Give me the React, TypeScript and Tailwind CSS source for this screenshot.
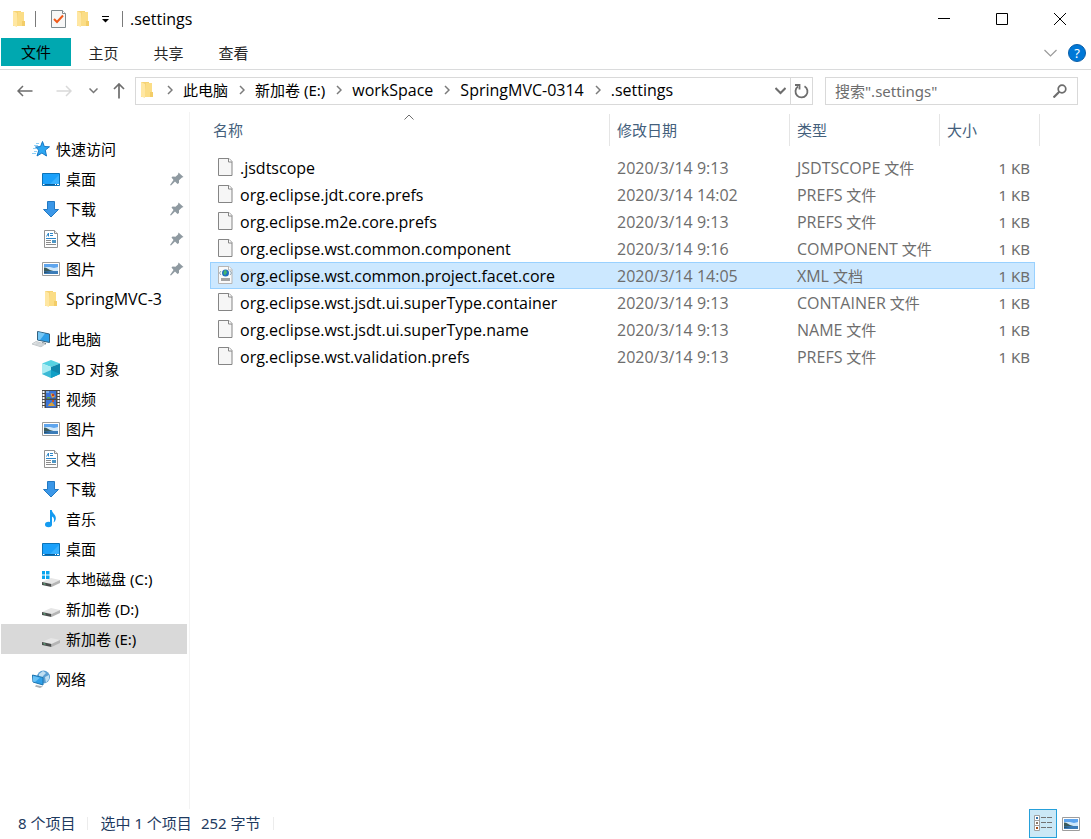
import React, { useState } from 'react';

type IconName =
    | 'star' | 'desktop' | 'download' | 'document' | 'picture' | 'folder' | 'pc'
    | 'cube' | 'video' | 'music' | 'systemDrive' | 'drive' | 'network';

type NavItem = {
    id: string;
    label: string;
    icon: IconName;
    pinned?: boolean;
};

type NavGroup = {
    root: NavItem;
    children: NavItem[];
};

type FileRow = {
    name: string;
    date: string;
    ext: string;
    kind: string;
    size: string;
    xml?: boolean;
};

const navGroups: NavGroup[] = [
    {
        root: { id: 'quick', label: '快速访问', icon: 'star' },
        children: [
            { id: 'q-desktop', label: '桌面', icon: 'desktop', pinned: true },
            { id: 'q-download', label: '下载', icon: 'download', pinned: true },
            { id: 'q-document', label: '文档', icon: 'document', pinned: true },
            { id: 'q-picture', label: '图片', icon: 'picture', pinned: true },
            { id: 'q-spring', label: 'SpringMVC-3', icon: 'folder' },
        ],
    },
    {
        root: { id: 'pc', label: '此电脑', icon: 'pc' },
        children: [
            { id: '3d', label: '3D 对象', icon: 'cube' },
            { id: 'video', label: '视频', icon: 'video' },
            { id: 'picture', label: '图片', icon: 'picture' },
            { id: 'document', label: '文档', icon: 'document' },
            { id: 'download', label: '下载', icon: 'download' },
            { id: 'music', label: '音乐', icon: 'music' },
            { id: 'desktop', label: '桌面', icon: 'desktop' },
            { id: 'c', label: '本地磁盘 (C:)', icon: 'systemDrive' },
            { id: 'd', label: '新加卷 (D:)', icon: 'drive' },
            { id: 'e', label: '新加卷 (E:)', icon: 'drive' },
        ],
    },
    { root: { id: 'network', label: '网络', icon: 'network' }, children: [] },
];

const files: FileRow[] = [
    { name: '.jsdtscope', date: '2020/3/14 9:13', ext: 'JSDTSCOPE', kind: '文件', size: '1 KB' },
    { name: 'org.eclipse.jdt.core.prefs', date: '2020/3/14 14:02', ext: 'PREFS', kind: '文件', size: '1 KB' },
    { name: 'org.eclipse.m2e.core.prefs', date: '2020/3/14 9:13', ext: 'PREFS', kind: '文件', size: '1 KB' },
    { name: 'org.eclipse.wst.common.component', date: '2020/3/14 9:16', ext: 'COMPONENT', kind: '文件', size: '1 KB' },
    { name: 'org.eclipse.wst.common.project.facet.core', date: '2020/3/14 14:05', ext: 'XML', kind: '文档', size: '1 KB', xml: true },
    { name: 'org.eclipse.wst.jsdt.ui.superType.container', date: '2020/3/14 9:13', ext: 'CONTAINER', kind: '文件', size: '1 KB' },
    { name: 'org.eclipse.wst.jsdt.ui.superType.name', date: '2020/3/14 9:13', ext: 'NAME', kind: '文件', size: '1 KB' },
    { name: 'org.eclipse.wst.validation.prefs', date: '2020/3/14 9:13', ext: 'PREFS', kind: '文件', size: '1 KB' },
];

const crumbs = ['此电脑', '新加卷 (E:)', 'workSpace', 'SpringMVC-0314', '.settings'];

// Latin-only labels are set one size larger than the Chinese ones
const LATIN = "font-['Open_Sans','Noto_Sans',sans-serif] text-[16px] leading-5";
const isLatin = (text: string) => /^[\x20-\x7e]+$/.test(text);

const FolderIcon = () => (
    <svg width="18" height="18" viewBox="0 0 18 18" className="shrink-0">
        <path d="M3 1h8v15H3z" fill="#f6d374" />
        <path d="M8 2h6v14H6z" fill="#fbdd86" />
        <path d="M12 11h3v5h-3z" fill="#f3cd68" />
        <path d="M3 1l4 2v14l-4-1.500z" fill="#ffe7a2" />
    </svg>
);

const PictureIcon = () => (
    <svg width="18" height="18" viewBox="0 0 18 18" className="shrink-0">
        <path d="M.5 2.500h17v13H.5z" fill="#fff" stroke="#9d9d9d" />
        <path d="M2 4h14v10H2z" fill="#cfe8fb" />
        <path d="M2 4h14v3l-4 1-4-1-6 0z" fill="#5ea5ee" />
        <path d="M2 7.500c3 0 4 1.500 6 2.500l5 1.500H2z" fill="#3c5b5c" />
        <path d="M2 11h14v3H2z" fill="#3b7cb8" />
        <path d="M2 11.500l7 .5-7 1z" fill="#26495c" />
    </svg>
);

const DriveBody = () => (
    <>
        <path d="M0 12l9-4 9 2-8.500 4z" fill="#e6e6e6" />
        <path d="M0 12l9.500 2v3L0 15z" fill="#4a4d4c" />
        <path d="M9.500 14L18 10v3l-8.500 4z" fill="#b5b5b5" />
        <path d="M1.500 13.700l2 .5" stroke="#63c38a" />
    </>
);

const NavIcon = ({ name }: { name: IconName }) => {
    if (name === 'folder') return <FolderIcon />;
    if (name === 'picture') return <PictureIcon />;
    return (
        <svg width="18" height="18" viewBox="0 0 18 18" className="shrink-0">
            {name === 'star' && (
                <>
                    <path d="M10.500 1.500l1.800 5 5.200.3-4.200 3.300 1.200 5.900-4.600-3-4.900 3 1.800-5.800L3.500 7l5-.4z" fill="#2da7f2" stroke="#1677c4" />
                    <path d="M4 3.500h3M2 5.500h4M1 8.500h3M2 11.500h3M0 13.500h4" stroke="#8fd0f6" />
                </>
            )}
            {name === 'desktop' && (
                <>
                    <path d="M.5 3.500h17v12H.5z" fill="#1ba1fb" stroke="#0b73b8" />
                    <path d="M8 14L17 5v9z" fill="#38b1ff" />
                    <path d="M1 14.500h16" stroke="#0c5e99" />
                    <path d="M1 14.500h1.500M13 14.500h1M15 14.500h2" stroke="#fff" />
                </>
            )}
            {name === 'download' && (
                <path d="M5.500 1.500h7v8h4L9 17 1.500 9.500h4z" fill="#3a97e8" stroke="#2379c2" />
            )}
            {name === 'document' && (
                <>
                    <path d="M2.500.5h10l3 3v14h-13z" fill="#fff" stroke="#929292" />
                    <path d="M12.500.5v3h3" fill="#eee" stroke="#929292" />
                    <path d="M4.500 6.500L6.500 3v3.500M8 3.500h3M8 5.500h3M4 8.500h10" stroke="#2c86c9" fill="none" />
                    <path d="M4 10.500h5M4 12.500h5M4 14.500h10" stroke="#8b8b8b" />
                    <path d="M10 10h4v3h-4z" fill="#4d96c5" />
                </>
            )}
            {name === 'pc' && (
                <>
                    <path d="M5.500 1.500l12 2.500v8.500L5.500 10z" fill="#2f9fe8" stroke="#34617e" />
                    <path d="M6 2l7 1.500L8 10l-2-.4z" fill="#76c7f5" />
                    <path d="M10 12l4 1v1.500l-4-1z" fill="#76848d" />
                    <path d="M0 14l4-2.500 9 2.500-4 2.800z" fill="#e3e6e8" stroke="#c3c8cb" />
                    <path d="M2.500 14l8 1.800M4 13l8 1.800" stroke="#cdd2d4" />
                </>
            )}
            {name === 'cube' && (
                <>
                    <path d="M0 3.500L9 0l9 3.500L9 7z" fill="#56d2e2" />
                    <path d="M0 3.500L9 7v11l-9-4z" fill="#a9ecf3" />
                    <path d="M18 3.500L9 7v11l9-4z" fill="#1087ad" />
                    <path d="M0 14l9-4v8z" fill="#3bb9d5" />
                    <path d="M9 10l9 4-9 4z" fill="#11a0c6" />
                </>
            )}
            {name === 'video' && (
                <>
                    <path d="M0 0h18v18H0z" fill="#4a4a4a" />
                    <path d="M1.500 1v17M16.500 1v17" stroke="#fff" strokeWidth="2" strokeDasharray="2 1" />
                    <path d="M4 1h10v7.500H4zM4 10h10v7.500H4z" fill="#3b75d8" />
                    <path d="M4 1h3v2H4z" fill="#77ace8" />
                    <path d="M8.500 3.500h3l1.500 3-3 1.500z" fill="#e7a33b" />
                    <path d="M10 4h2v2h-2z" fill="#c43d23" />
                    <path d="M7 14l3-2 3 4H6z" fill="#d6a13d" />
                    <path d="M10 10h2v2h-2z" fill="#c95325" />
                    <path d="M5 7h3v1.500H5z" fill="#58a24c" />
                </>
            )}
            {name === 'music' && (
                <>
                    <ellipse cx="6.500" cy="14.500" rx="3.500" ry="2.700" fill="#159bf0" />
                    <path d="M8 0h1.800c.3 3.500 4.700 4.500 4 9-.2 1.500-1.300 3-2.300 3.500 1-2.500.8-5-1.500-6v8H8z" fill="#159bf0" />
                </>
            )}
            {name === 'systemDrive' && (
                <>
                    <DriveBody />
                    <path d="M0 1h8v8H0z" fill="#fff" />
                    <path d="M0 1h3v3.500H0zM4 1h3.500v3.500H4zM0 5.500h3V9H0zM4 5.500h3.500V9H4z" fill="#08a5ed" />
                </>
            )}
            {name === 'drive' && <DriveBody />}
            {name === 'network' && (
                <>
                    <circle cx="11.500" cy="7" r="6.500" fill="#5b9fd2" />
                    <path d="M7 4l4-3 3 2-3 3-1 3-3-1zM13 7l4-2v4l-3 4z" fill="#c0dff2" />
                    <path d="M.5 5L11 7.500V15L1 12z" fill="#2f9fe8" stroke="#1d74af" />
                    <path d="M1 6l7 1.700L3 12l-2-.5z" fill="#68c1f5" />
                    <path d="M4 15l7 1.500-3 1.500-5-1.500z" fill="#a9b0b5" />
                </>
            )}
        </svg>
    );
};

const PinIcon = () => (
    <svg width="14" height="14" viewBox="0 0 14 14" className="shrink-0">
        <path d="M8.500.5l5 4.500-1.500.5-3 2.800V11L7.500 12 5 9.500 1 13.500l-1-.5 3.500-5L1.500 5.500 2.500 4.500l3 .3L8 2.500z" fill="#8f9aa1" />
    </svg>
);

const FileIcon = ({ xml }: { xml?: boolean }) => (
    <svg width="16" height="20" viewBox="0 0 16 20" className="shrink-0">
        <path d="M.5.5h10.500l3 3v14H.5z" fill={xml ? '#fafafa' : '#f6f6f6'} stroke={xml ? '#b5b5b5' : '#858585'} />
        <path d="M10.500.5V4H14" fill="#fff" stroke={xml ? '#b5b5b5' : '#858585'} />
        {xml && (
            <>
                <circle cx="7.500" cy="7" r="3.500" fill="#1d6fc0" />
                <path d="M6 4.500l2-.5 1 2.500-2 3-1.500-2z" fill="#45b46f" />
                <path d="M3 5L1.500 7 3 9M12 5l1.500 2L12 9" stroke="#8fa6b5" fill="none" />
                <path d="M3 12h9v3H3z" fill="#a3a3a3" />
            </>
        )}
    </svg>
);

const Chevron = () => (
    <svg width="6" height="10" viewBox="0 0 6 10" className="shrink-0">
        <path d="M1 1l4 4-4 4" fill="none" stroke="#7b7b7b" strokeWidth="1.500" />
    </svg>
);

const TitleBar = () => (
    <header className="flex h-[38px] items-center">
        <div className="flex flex-1 items-center pl-[10px]">
            <FolderIcon />
            <span className="ml-[7px] h-4 w-px bg-[#7a7a7a]" />
            <button aria-label="属性" className="ml-[15px]">
                <svg width="15" height="18" viewBox="0 0 15 18">
                    <path d="M.5.5h11l3 3v14H.5z" fill="#f7f7f7" stroke="#808a8e" />
                    <path d="M11.500.5v3h3" fill="#fff" stroke="#808a8e" />
                    <path d="M3 9l3 3 6-6.500" fill="none" stroke="#f05a1a" strokeWidth="2" />
                </svg>
            </button>
            <button aria-label="新建文件夹" className="ml-2"><FolderIcon /></button>
            <button aria-label="自定义快速访问工具栏" className="ml-[10px]">
                <svg width="7" height="7" viewBox="0 0 7 7">
                    <path d="M0 .5h7" stroke="#000" />
                    <path d="M0 3h7L3.500 6.500z" fill="#000" />
                </svg>
            </button>
            <span className="ml-[13px] h-4 w-px bg-[#7a7a7a]" />
            <h1 className={`ml-[7px] ${LATIN}`}>.settings</h1>
        </div>
        <div className="flex self-stretch pr-0.5">
            <button aria-label="最小化" className="flex w-[58px] items-center justify-center">
                <svg width="12" height="12" viewBox="0 0 12 12"><path d="M0 5.500h12" stroke="#000" /></svg>
            </button>
            <button aria-label="最大化" className="flex w-[58px] items-center justify-center">
                <svg width="12" height="12" viewBox="0 0 12 12"><path d="M.5.5h11v11H.5z" fill="none" stroke="#000" /></svg>
            </button>
            <button aria-label="关闭" className="flex w-[58px] items-center justify-center">
                <svg width="12" height="12" viewBox="0 0 12 12"><path d="M0 0l12 12M12 0L0 12" stroke="#000" /></svg>
            </button>
        </div>
    </header>
);

const RibbonTabs = () => (
    <nav className="flex h-8 items-start border-b border-[#dadbdc] pl-px">
        <button className="h-7 w-[70px] bg-[#00a8b0]">文件</button>
        {['主页', '共享', '查看'].map((tab) => (
            <button key={tab} className="h-[30px] w-[65px] text-[#262626]">{tab}</button>
        ))}
        <div className="ml-auto flex h-[30px] items-center gap-[11px] pr-[5px]">
            <button aria-label="展开功能区">
                <svg width="13" height="8" viewBox="0 0 13 8"><path d="M.5 1l6 6 6-6" fill="none" stroke="#9b9b9b" strokeWidth="1.200" /></svg>
            </button>
            <button aria-label="帮助" className="flex size-[18px] items-center justify-center rounded-full border border-[#0a5ea8] bg-[#0078d7] text-[13px] leading-4 text-white">?</button>
        </div>
    </nav>
);

const AddressBar = () => (
    <div className="flex h-[42px] items-center pb-px pr-[13px]">
        <div className="flex w-[135px] items-center pl-[17px] pt-px">
            <button aria-label="后退">
                <svg width="16" height="12" viewBox="0 0 16 12"><path d="M15.500 6H1M6 1L1 6l5 5" fill="none" stroke="#6d6d6d" strokeWidth="1.500" /></svg>
            </button>
            <button aria-label="前进" className="ml-[23px]">
                <svg width="16" height="12" viewBox="0 0 16 12"><path d="M.5 6H15M10 1l5 5-5 5" fill="none" stroke="#d9d9d9" strokeWidth="1.500" /></svg>
            </button>
            <button aria-label="最近浏览的位置" className="ml-[17px]">
                <svg width="9" height="6" viewBox="0 0 9 6"><path d="M.5.5l4 4 4-4" fill="none" stroke="#777" strokeWidth="1.500" /></svg>
            </button>
            <button aria-label="上移" className="ml-[15px]">
                <svg width="12" height="16" viewBox="0 0 12 16"><path d="M6 15.500V1M1 6l5-5 5 5" fill="none" stroke="#6d6d6d" strokeWidth="1.700" /></svg>
            </button>
        </div>
        <div className="flex h-7 min-w-0 flex-1 items-center border border-[#d9d9d9]">
            <div className="flex min-w-0 flex-1 items-center pb-0.5 pl-[2px]">
                <FolderIcon />
                {crumbs.map((crumb) => (
                    <span key={crumb} className="flex items-center whitespace-nowrap pl-[11px]">
                        <Chevron />
                        <a href="#" className={`pl-[10px] text-black ${isLatin(crumb) ? LATIN : ''}`}>{crumb}</a>
                    </span>
                ))}
            </div>
            <button aria-label="以前的位置" className="mr-1">
                <svg width="11" height="8" viewBox="0 0 11 8"><path d="M.5 1l5 5 5-5" fill="none" stroke="#6d6d6d" strokeWidth="2" /></svg>
            </button>
            <button aria-label="刷新" className="flex w-[22px] items-center justify-center self-stretch border-l border-[#d9d9d9]">
                <svg width="15" height="16" viewBox="0 0 15 16">
                    <path d="M10.500 3.200a6 6 0 1 1-6.500.3" fill="none" stroke="#6d6d6d" strokeWidth="1.800" />
                    <path d="M1 2h4.500v4.500" fill="none" stroke="#6d6d6d" strokeWidth="1.800" />
                </svg>
            </button>
        </div>
        <form className="ml-3 flex h-7 w-[253px] items-center border border-[#d9d9d9] pl-[9px] pr-[10px]">
            <input
                type="search"
                aria-label="搜索"
                placeholder={'搜索".settings"'}
                className="min-w-0 flex-1 outline-none placeholder:text-[#6d6d6d]"
            />
            <button type="button" aria-label="开始搜索">
                <svg width="14" height="14" viewBox="0 0 14 14">
                    <circle cx="9" cy="5" r="3.800" fill="none" stroke="#6d6d6d" strokeWidth="1.700" />
                    <path d="M6.500 7.500l-6 6" stroke="#6d6d6d" strokeWidth="2.200" />
                </svg>
            </button>
        </form>
    </div>
);

const Sidebar = () => {
    const [selected, setSelected] = useState<string>('e');

    const renderItem = (item: NavItem, padding: string) => (
        <li key={item.id}>
            <button
                onClick={() => setSelected(item.id)}
                className={`flex h-[30px] w-full items-center gap-1.5 pr-[3px] text-left ${padding} ${selected === item.id ? 'bg-[#d9d9d9]' : ''}`}
            >
                <NavIcon name={item.icon} />
                <span className={`flex-1 whitespace-nowrap ${isLatin(item.label) ? LATIN : ''}`}>{item.label}</span>
                {item.pinned && <PinIcon />}
            </button>
        </li>
    );

    return (
        <aside className="flex w-[190px] shrink-0 flex-col gap-[10px] border-r border-[#f3f3f3] pl-px pr-[2px] pt-[22px]">
            {navGroups.map((group) => (
                <ul key={group.root.id}>
                    {renderItem(group.root, 'pl-[31px]')}
                    {group.children.map((child) => renderItem(child, 'pl-[41px]'))}
                </ul>
            ))}
        </aside>
    );
};

const FileTable = () => {
    const [selected, setSelected] = useState<number>(4);

    return (
        <main className="min-w-0 flex-1 pl-5 pr-[51px] pt-[2px]">
            <table className="w-full table-fixed border-separate border-spacing-0">
                <colgroup>
                    <col />
                    <col className="w-[180px]" />
                    <col className="w-[150px]" />
                    <col className="w-[95px]" />
                    <col className="w-[5px]" />
                </colgroup>
                <thead>
                    <tr className="h-8 text-left text-[#44607c]">
                        <th className="relative border-r border-[#e5e5e5] pl-[3px] font-normal">
                            名称
                            <svg width="10" height="6" viewBox="0 0 10 6" className="absolute left-1/2 top-0 -translate-x-1/2">
                                <path d="M.5 5.500l4.500-4.500 4.500 4.500" fill="none" stroke="#6d6d6d" />
                            </svg>
                        </th>
                        <th className="border-r border-[#e5e5e5] pl-[7px] font-normal">修改日期</th>
                        <th className="border-r border-[#e5e5e5] pl-[7px] font-normal">类型</th>
                        <th colSpan={2} className="border-r border-[#e5e5e5] pl-[7px] font-normal">大小</th>
                    </tr>
                </thead>
                <tbody className="before:block before:h-2">
                    {files.map((file, index) => {
                        const active = selected === index;
                        const cell = active ? 'border-y border-[#99d1ff] bg-[#cce8ff]' : 'border-y border-transparent';
                        return (
                            <tr key={file.name} onClick={() => setSelected(index)} className="h-[27px] text-[#6d6d6d]">
                                <td className={`${cell} border-l pl-[7px]`}>
                                    <div className="flex h-[25px] items-center gap-[6px] text-black">
                                        <FileIcon xml={file.xml} />
                                        <span className={`whitespace-nowrap ${LATIN}`}>{file.name}</span>
                                    </div>
                                </td>
                                <td className={`${cell} whitespace-nowrap pl-[7px] ${LATIN}`}>{file.date}</td>
                                <td className={`${cell} whitespace-nowrap pl-[7px]`}>
                                    <span className={LATIN}>{file.ext}</span> {file.kind}
                                </td>
                                <td className={`${cell} border-r pr-1 text-right`}>{file.size}</td>
                            </tr>
                        );
                    })}
                </tbody>
            </table>
        </main>
    );
};

const StatusBar = () => (
    <footer className="flex h-[30px] items-start pl-[18px] pr-[6px] text-[#1e3a5f]">
        <div className="flex h-7 items-center">
            <span>8 个项目</span>
            <span className="ml-3 h-[13px] w-px bg-[#ececec]" />
            <span className="ml-3">选中 1 个项目</span>
            <span className="ml-[9px]">252 字节</span>
            <span className="ml-3 h-[13px] w-px bg-[#ececec]" />
        </div>
        <div className="ml-auto flex">
            <button aria-label="详细信息" className="flex h-[29px] w-7 items-center justify-center border border-[#26a0da] bg-[#cbe8f6]">
                <svg width="18" height="17" viewBox="0 0 18 17">
                    <path d="M.5.5h5v5h-5zM.5 5.500h5v5h-5zM.5 10.500h5v5h-5z" fill="#fff" stroke="#a0a0a0" />
                    <path d="M2 2h2v2H2z" fill="#3574ab" />
                    <path d="M2 7h2v2H2z" fill="#8b7765" />
                    <path d="M2 12h2v2H2z" fill="#a84c16" />
                    <path d="M7 2.500h5M13 2.500h5M7 7.500h5M13 7.500h5M7 12.500h5M13 12.500h5" stroke="#737373" />
                </svg>
            </button>
            <button aria-label="大缩略图" className="flex h-[29px] w-7 items-center justify-center"><PictureIcon /></button>
        </div>
    </footer>
);

export default function App() {
    return (
        <div className="flex min-h-screen flex-col bg-white font-['Noto_Sans','Noto_Sans_CJK_SC',sans-serif] text-[15px] leading-5 text-black">
            <TitleBar />
            <RibbonTabs />
            <AddressBar />
            <div className="flex flex-1">
                <Sidebar />
                <FileTable />
            </div>
            <StatusBar />
        </div>
    );
}
